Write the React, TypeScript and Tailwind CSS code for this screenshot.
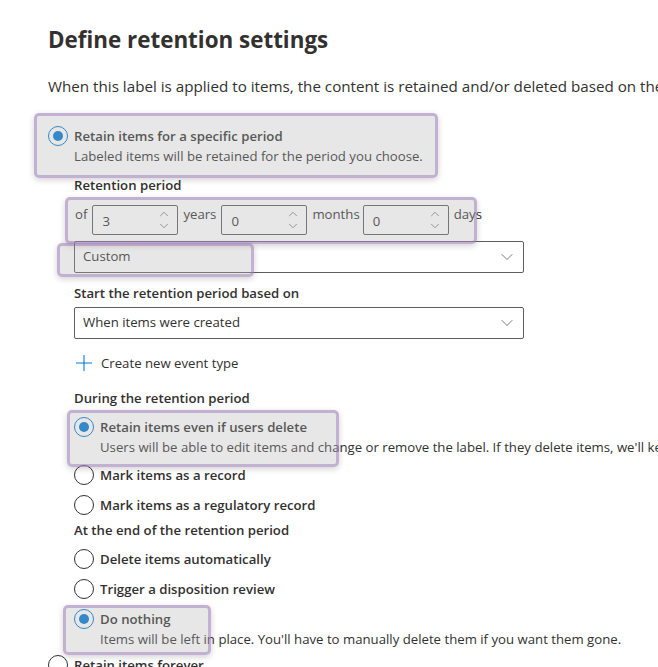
import { ChevronDown, ChevronUp, Plus } from 'lucide-react';

const font = { fontFamily: '"Segoe UI", "Open Sans", "Noto Sans", sans-serif' };

function Radio({ checked }: { checked?: boolean }) {
  return checked ? (
    <span className="flex h-[20px] w-[20px] shrink-0 items-center justify-center rounded-full border border-[#0078d4] bg-white">
      <span className="h-[10px] w-[10px] rounded-full bg-[#0078d4]" />
    </span>
  ) : (
    <span className="h-[20px] w-[20px] shrink-0 rounded-full border border-[#323130] bg-white" />
  );
}

function RadioRow({
  label,
  sub,
  checked,
  className = '',
}: {
  label: string;
  sub?: string;
  checked?: boolean;
  className?: string;
}) {
  return (
    <div className={`flex items-start gap-[6px] ${className}`}>
      <Radio checked={checked} />
      <div className="flex flex-col">
        <span className="text-[13.2px] leading-[20px] font-semibold text-[#323130]">{label}</span>
        {sub && <span className="whitespace-nowrap text-[13.2px] leading-[20px] text-[#323130]">{sub}</span>}
      </div>
    </div>
  );
}

function SpinInput({ value }: { value: string }) {
  return (
    <div className="flex h-[30px] w-[86px] items-center justify-between rounded-[2px] border border-[#605e5c] bg-white pl-[9px] pr-[6px]">
      <span className="pt-[2px] text-[13.2px] text-[#323130]">{value}</span>
      <div className="flex flex-col items-center text-[#605e5c]">
        <ChevronUp size={14} strokeWidth={1.25} className="-mb-[2px]" />
        <ChevronDown size={14} strokeWidth={1.25} />
      </div>
    </div>
  );
}

function Dropdown({ value, className = '' }: { value: string; className?: string }) {
  return (
    <div
      className={`flex h-[32px] w-[450px] items-center justify-between rounded-[2px] border border-[#605e5c] bg-white pl-[8px] pr-[6px] ${className}`}
    >
      <span className="text-[13.2px] text-[#323130]">{value}</span>
      <ChevronDown size={20} strokeWidth={1} className="text-[#605e5c]" />
    </div>
  );
}

function Highlight({ className }: { className: string }) {
  return (
    <div
      className={`pointer-events-none absolute rounded-[5px] border-[3px] border-[rgba(150,110,185,0.45)] bg-[rgba(176,176,176,0.3)] shadow-[0_2px_6px_rgba(0,0,0,0.18)] ${className}`}
    />
  );
}

export default function App() {
  return (
    <div className="relative h-[667px] w-[658px] overflow-hidden bg-white text-[#323130]" style={font}>
      <div className="flex flex-col pl-[48px] pt-[24px]">
        <h1 className="text-[22.4px] leading-[32px] font-bold">Define retention settings</h1>
        <p className="mt-[20px] whitespace-nowrap text-[15.2px] leading-[20px]">
          When this label is applied to items, the content is retained and/or deleted based on the settings you choose.
        </p>

        <RadioRow
          className="mt-[30px]"
          checked
          label="Retain items for a specific period"
          sub="Labeled items will be retained for the period you choose."
        />

        <div className="flex flex-col pl-[26px]">
          <span className="mt-[9px] text-[13.2px] leading-[20px] font-semibold">Retention period</span>

          <div className="mt-[10px] flex items-start gap-[5px] text-[13.2px] leading-[20px]">
            <span className="-mt-[1px] pl-[1px]">of</span>
            <SpinInput value="3" />
            <span className="-mt-[1px]">years</span>
            <SpinInput value="0" />
            <span className="-mt-[1px] -mr-[2px]">months</span>
            <SpinInput value="0" />
            <span className="-mt-[1px]">days</span>
          </div>

          <Dropdown value="Custom" className="mt-[6px]" />

          <span className="mt-[10px] text-[13.2px] leading-[20px] font-semibold">Start the retention period based on</span>
          <Dropdown value="When items were created" className="mt-[4px]" />

          <div className="mt-[11px] flex items-center gap-[4px] -ml-[3px]">
            <Plus size={26} strokeWidth={1} className="text-[#0078d4]" />
            <span className="text-[13.2px] leading-[20px]">Create new event type</span>
          </div>

          <span className="mt-[12px] text-[13.2px] leading-[20px] font-semibold">During the retention period</span>
          <RadioRow
            className="mt-[9px]"
            checked
            label="Retain items even if users delete"
            sub="Users will be able to edit items and change or remove the label. If they delete items, we'll keep copies in a secure location."
          />
          <RadioRow className="mt-[8px]" label="Mark items as a record" />
          <RadioRow className="mt-[10px]" label="Mark items as a regulatory record" />

          <span className="mt-[5px] text-[13.2px] leading-[20px] font-semibold">At the end of the retention period</span>
          <RadioRow className="mt-[9px]" label="Delete items automatically" />
          <RadioRow className="mt-[10px]" label="Trigger a disposition review" />
          <RadioRow
            className="mt-[10px]"
            checked
            label="Do nothing"
            sub="Items will be left in place. You'll have to manually delete them if you want them gone."
          />
        </div>

        <RadioRow className="mt-[6px]" label="Retain items forever" />
      </div>

      <Highlight className="left-[34px] top-[113px] h-[65px] w-[404px]" />
      <Highlight className="left-[65px] top-[197px] h-[47px] w-[412px]" />
      <Highlight className="left-[57px] top-[243px] h-[34px] w-[197px]" />
      <Highlight className="left-[67px] top-[410px] h-[57px] w-[272px]" />
      <Highlight className="left-[63px] top-[605px] h-[50px] w-[148px]" />
    </div>
  );
}
